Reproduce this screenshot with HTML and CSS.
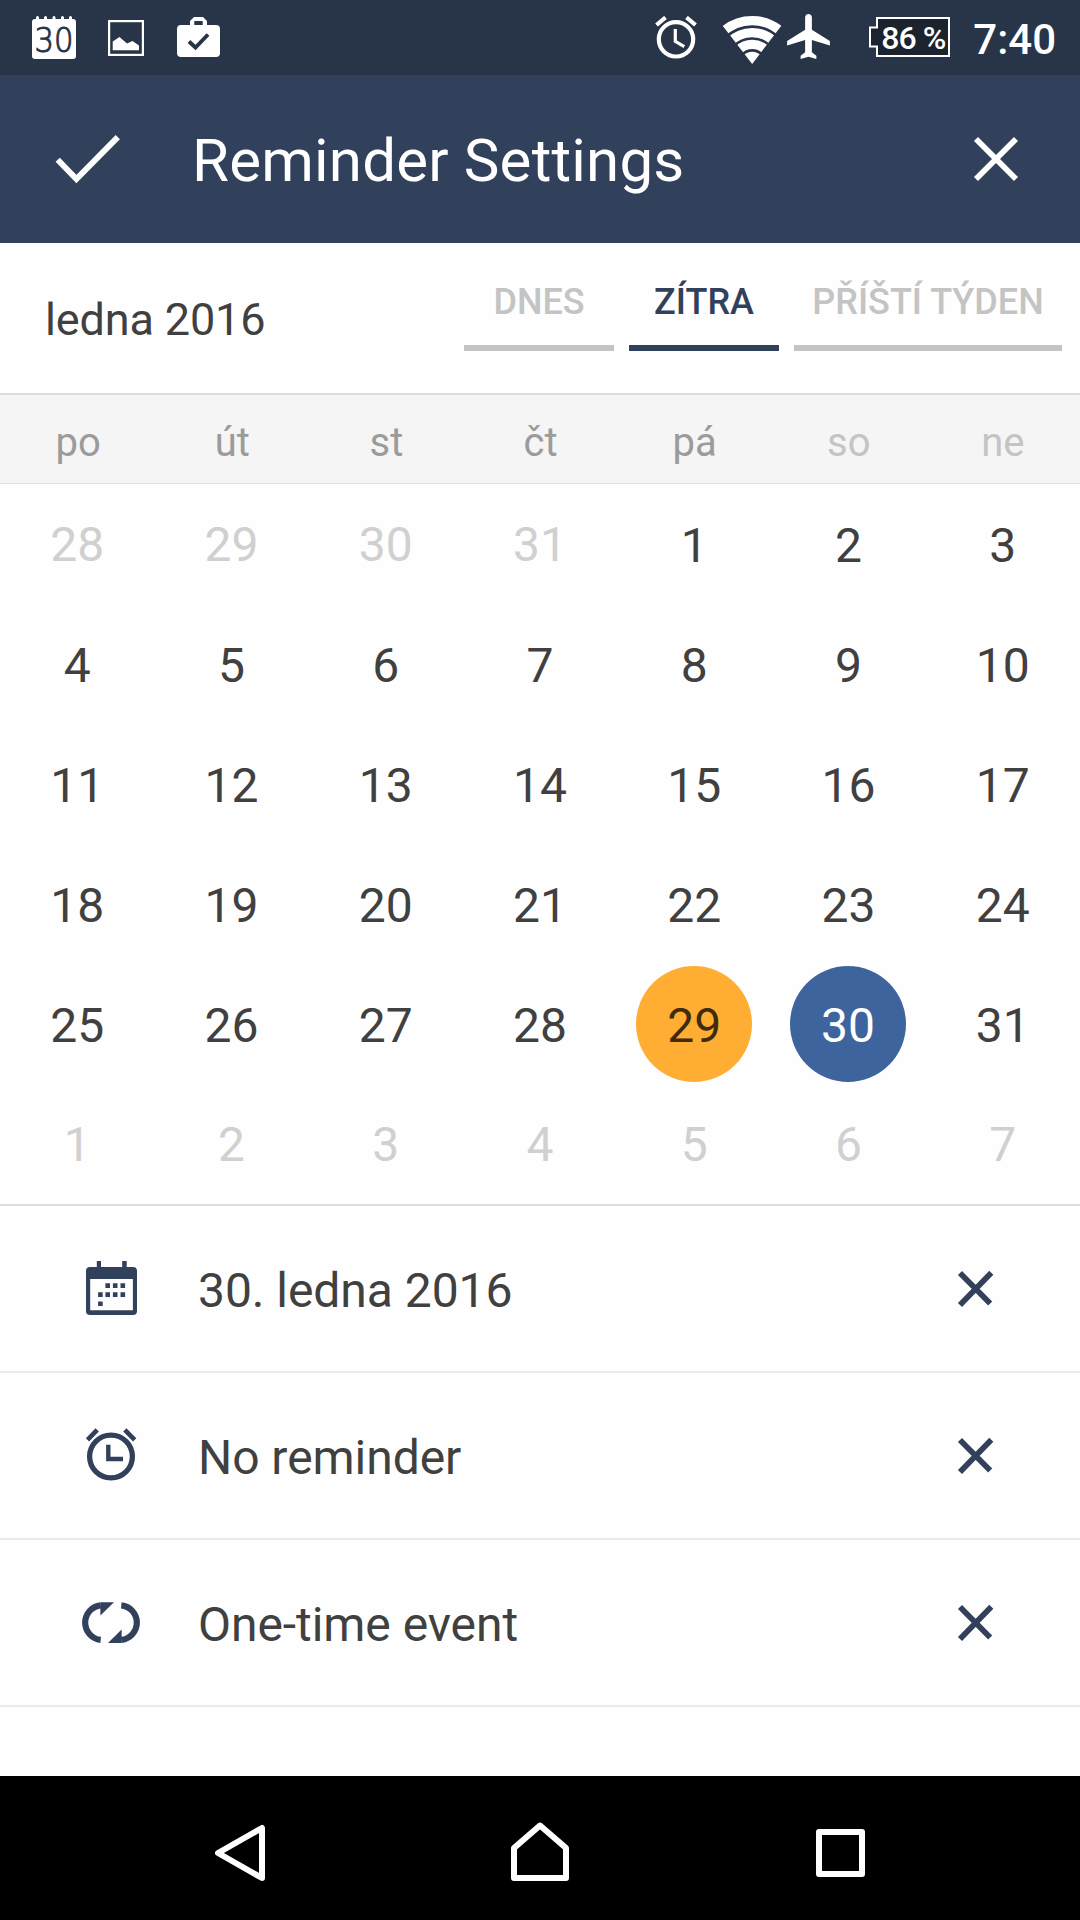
FILE: index.html
```html
<!DOCTYPE html>
<html lang="cs">
<head>
  <meta charset="UTF-8" />
  <meta name="viewport" content="width=device-width, initial-scale=1.0" />
  <title>Reminder Settings</title>
  <link rel="stylesheet" href="styles.css">
</head>
<body>
  <div class="status-bar">
    <div class="notifications">
      <svg class="icon-date" viewBox="0 0 44 44">
        <path fill="#fff" d="M3 3h1V1.500a1.500 1.500 0 0 1 3 0V3h5V1.500a1.500 1.500 0 0 1 3 0V3h5.500V1.500a1.500 1.500 0 0 1 3 0V3h5.500V1.500a1.500 1.500 0 0 1 3 0V3h5V1.500a1.500 1.500 0 0 1 3 0V3h1a3 3 0 0 1 3 3v34a3 3 0 0 1-3 3H3a3 3 0 0 1-3-3V6a3 3 0 0 1 3-3z"/>
        <text class="date-text" x="2.500" y="35.500" textLength="39" lengthAdjust="spacingAndGlyphs">30</text>
      </svg>
      <svg class="icon-picture" viewBox="0 0 36 36">
        <rect x="1.100" y="1.100" width="33.800" height="33.800" fill="none" stroke="#fff" stroke-width="2.200"/>
        <path fill="#fff" d="M4.700 30.300V21.500L11.500 17l7.500 6.500 5.500-2.500 6.500 4.500v4.800z"/>
      </svg>
      <svg class="icon-bag" viewBox="0 0 43 44">
        <path fill="#fff" fill-rule="evenodd" d="M4 9h9V5l4-4h9l4 4v4h9a4 4 0 0 1 4 4v24a4 4 0 0 1-4 4H4a4 4 0 0 1-4-4V13a4 4 0 0 1 4-4zM17.300 5v4h8.400V5z"/>
        <path d="M12 25.500l6.500 6L31 18.500" fill="none" stroke="#283447" stroke-width="3.900"/>
      </svg>
    </div>
    <div class="system">
      <svg class="icon-alarm" viewBox="0 0 42 44">
        <g fill="none" stroke="#fff">
          <circle cx="21" cy="23.300" r="17.200" stroke-width="4.200"/>
          <path d="M1.500 9l9-7.500M31.500 1.500l9 7.500" stroke-width="4.200"/>
          <path d="M20.300 13v12.300l9 5.400" stroke-width="3.200"/>
        </g>
      </svg>
      <svg class="icon-wifi" viewBox="278 47 175 145">
        <clipPath id="wedge"><path d="M366 192L278 78V40h175v38z"/></clipPath>
        <g clip-path="url(#wedge)" fill="none" stroke="#fff" stroke-width="28">
          <circle cx="366" cy="192" r="131"/>
          <circle cx="366" cy="192" r="95"/>
          <circle cx="366" cy="192" r="59"/>
          <circle cx="366" cy="192" r="37" fill="#fff" stroke="none"/>
        </g>
      </svg>
      <svg class="icon-plane" viewBox="2 2 19 20">
        <path fill="#fff" d="M21 16v-2l-8-5V3.500c0-.83-.67-1.500-1.500-1.500S10 2.670 10 3.500V9l-8 5v2l8-2.500V19l-2 1.500V22l3.500-1 3.500 1v-1.500L13 19v-5.500l8 2.500z"/>
      </svg>
      <div class="battery">
        <svg class="battery-shape" viewBox="0 0 81 40">
          <path d="M8 1h72v38H8V29.500H1v-19h7z" fill="#1a232e" stroke="#fff" stroke-width="2"/>
        </svg>
        <span class="battery-text">86 %</span>
      </div>
      <span class="time">7:40</span>
    </div>
  </div>

  <header class="app-bar">
    <svg class="icon-check" viewBox="0 0 66 50">
      <path d="M2.700 25.700L21.400 45 62.800 3.200" fill="none" stroke="#fff" stroke-width="5.900"/>
    </svg>
    <h1>Reminder Settings</h1>
    <svg class="icon-cancel" viewBox="0 0 44 44">
      <path d="M2 2l40 40M42 2L2 42" stroke="#fff" stroke-width="5.700"/>
    </svg>
  </header>

  <section class="month-bar">
    <div class="month">ledna 2016</div>
    <div class="tabs">
      <div class="tab">DNES</div>
      <div class="tab active">ZÍTRA</div>
      <div class="tab wide">PŘÍŠTÍ TÝDEN</div>
    </div>
  </section>

  <div class="week">
    <span>po</span><span>út</span><span>st</span><span>čt</span><span>pá</span><span class="weekend">so</span><span class="weekend">ne</span>
  </div>

  <div class="days">
    <span class="other">28</span><span class="other">29</span><span class="other">30</span><span class="other">31</span><span>1</span><span>2</span><span>3</span>
    <span>4</span><span>5</span><span>6</span><span>7</span><span>8</span><span>9</span><span>10</span>
    <span>11</span><span>12</span><span>13</span><span>14</span><span>15</span><span>16</span><span>17</span>
    <span>18</span><span>19</span><span>20</span><span>21</span><span>22</span><span>23</span><span>24</span>
    <span>25</span><span>26</span><span>27</span><span>28</span><span class="today">29</span><span class="selected">30</span><span>31</span>
    <span class="other">1</span><span class="other">2</span><span class="other">3</span><span class="other">4</span><span class="other">5</span><span class="other">6</span><span class="other">7</span>
  </div>

  <main class="settings">
    <div class="row">
      <svg class="row-icon" viewBox="0 0 60 61">
        <g transform="translate(5 3)" fill="#32415b">
          <path fill-rule="evenodd" d="M4 6h6.800V0H15v6h21.200V0h4.500v6H47a4 4 0 0 1 4 4v40a4 4 0 0 1-4 4H4a4 4 0 0 1-4-4V10a4 4 0 0 1 4-4zM4.200 18v31.300h42.700V18z"/>
          <path d="M19.400 22.300h4.600v4.600h-4.600zM26.900 22.300h4.600v4.600h-4.600zM34.500 22.300h4.600v4.600h-4.600zM12.100 31.300h4.600v4.600h-4.600zM19.400 31.300h4.600v4.600h-4.600zM26.900 31.300h4.600v4.600h-4.600zM34.500 31.300h4.600v4.600h-4.600zM12.100 40.400h4.600V45h-4.600z"/>
        </g>
      </svg>
      <span class="row-text">30. ledna 2016</span>
      <svg class="row-close" viewBox="0 0 36 37">
        <path d="M2 3L32.200 33.600M33.300 2.800L2 35" stroke="#32415b" stroke-width="5.700"/>
      </svg>
    </div>
    <div class="row">
      <svg class="row-icon" viewBox="0 0 60 61">
        <g fill="none" stroke="#32415b">
          <circle cx="30" cy="31.500" r="21.400" stroke-width="5.300"/>
          <path d="M6.500 14.800L16.200 4.800M43.800 4.800l9.900 10" stroke-width="4.600"/>
          <path d="M27.300 19.700V34H42" stroke-width="4.400"/>
        </g>
      </svg>
      <span class="row-text">No reminder</span>
      <svg class="row-close" viewBox="0 0 36 37">
        <path d="M2 3L32.200 33.600M33.300 2.800L2 35" stroke="#32415b" stroke-width="5.700"/>
      </svg>
    </div>
    <div class="row">
      <svg class="row-icon" viewBox="0 0 60 61">
        <g id="half" fill="#32415b">
          <path d="M19.700 47.900A17.400 17.400 0 0 1 19.700 13.300" fill="none" stroke="#32415b" stroke-width="6.200"/>
          <path d="M19.400 10.200H33L19.400 23.600z"/>
        </g>
        <use href="#half" transform="rotate(180 30 30.600)"/>
      </svg>
      <span class="row-text">One-time event</span>
      <svg class="row-close" viewBox="0 0 36 37">
        <path d="M2 3L32.200 33.600M33.300 2.800L2 35" stroke="#32415b" stroke-width="5.700"/>
      </svg>
    </div>
  </main>

  <nav class="nav-bar">
    <svg viewBox="0 0 72 72"><path d="M58 16v50L14 41z"/></svg>
    <svg viewBox="0 0 72 72"><path d="M36 13.500L62 36v30H10V36z"/></svg>
    <svg viewBox="0 0 72 72"><path d="M15 20h43v42H15z"/></svg>
  </nav>
</body>
</html>
```

FILE: styles.css
```css
* {
  margin: 0;
  padding: 0;
  box-sizing: border-box;
}

body {
  width: 1080px;
  height: 1920px;
  display: flex;
  flex-direction: column;
  font-family: Roboto, sans-serif;
  background: #fefefe;
  color: #404040;
  overflow: hidden;
}

svg {
  display: block;
  flex: none;
}

/* status bar */
.status-bar {
  height: 75px;
  padding: 0 24px 0 32px;
  display: flex;
  justify-content: space-between;
  background: #283447;
  color: #fff;
  font-weight: 500;
}

.notifications,
.system {
  display: flex;
  align-items: flex-start;
}

.icon-date {
  width: 44px;
  height: 44px;
  margin-top: 16px;
}

.date-text {
  font-family: "DejaVu Sans", sans-serif;
  font-weight: 200;
  font-size: 33px;
  fill: #283447;
  stroke: #283447;
  stroke-width: 1px;
}

.icon-picture {
  width: 36px;
  height: 36px;
  margin: 20px 0 0 32px;
}

.icon-bag {
  width: 43px;
  height: 44px;
  margin: 16px 0 0 33px;
}

.icon-alarm {
  width: 42px;
  height: 44px;
  margin-top: 16px;
}

.icon-wifi {
  width: 58px;
  height: 48px;
  margin: 16px 0 0 26px;
}

.icon-plane {
  width: 43px;
  height: 45px;
  margin: 14px 0 0 6px;
}

.battery {
  position: relative;
  width: 81px;
  height: 40px;
  margin: 17px 0 0 39px;
}

.battery-shape {
  width: 81px;
  height: 40px;
}

.battery-text {
  position: absolute;
  top: 0;
  left: 7px;
  width: 74px;
  font-size: 32px;
  letter-spacing: -0.9px;
  line-height: 42px;
  text-align: center;
  white-space: nowrap;
}

.time {
  margin-left: 23px;
  font-size: 42px;
  line-height: 79px;
}

/* app bar */
.app-bar {
  height: 168px;
  padding: 0 62px 0 55px;
  display: flex;
  align-items: center;
  background: #32415b;
  color: #fff;
}

.app-bar h1 {
  flex: 1;
  margin-left: 71px;
  padding-top: 3px;
  font-size: 60px;
  font-weight: 400;
  letter-spacing: 0.2px;
}

.icon-check {
  width: 66px;
  height: 50px;
}

.icon-cancel {
  width: 44px;
  height: 44px;
  overflow: visible;
}

/* month and shortcuts */
.month-bar {
  height: 152px;
  padding: 0 18px 0 45px;
  display: flex;
  justify-content: space-between;
  border-bottom: 2px solid #ddd;
}

.month {
  font-size: 45px;
  letter-spacing: -0.15px;
  line-height: 153px;
}

.tabs {
  display: flex;
  gap: 15px;
}

.tab {
  width: 150px;
  height: 108px;
  border-bottom: 6px solid #c4c4c4;
  color: #c4c4c4;
  font-size: 36px;
  font-weight: 500;
  line-height: 118px;
  text-align: center;
  white-space: nowrap;
}

.tab.wide {
  width: 268px;
}

.tab.active {
  color: #32415b;
  border-color: #32415b;
}

/* calendar */
.week,
.days {
  display: grid;
  grid-template-columns: repeat(7, 1fr);
  text-align: center;
}

.week {
  height: 89px;
  padding-left: 1px;
  background: #f5f5f5;
  border-bottom: 1px solid #ddd;
  color: #9b9b9b;
  font-size: 40px;
  line-height: 96px;
}

.week .weekend {
  color: #c4c4c4;
}

.days {
  height: 722px;
  grid-auto-rows: 120px;
  align-items: center;
  justify-items: center;
  border-bottom: 2px solid #ddd;
  font-size: 48px;
}

.days span {
  width: 116px;
  height: 116px;
  line-height: 120px;
  border-radius: 50%;
}

.days .other {
  color: #d0d0d0;
  line-height: 118px;
}

.days .today {
  background: #ffad33;
  color: #402b0d;
}

.days .selected {
  margin-right: 1px;
  background: #3e649e;
  color: #fff;
}

/* settings rows */
.settings {
  flex: 1;
}

.row {
  height: 167px;
  padding: 0 86px 0 81px;
  display: flex;
  align-items: center;
  border-bottom: 2px solid #ebebeb;
}

.row-icon {
  width: 60px;
  height: 61px;
}

.row-text {
  flex: 1;
  margin-left: 57px;
  padding-top: 4px;
  font-size: 48px;
  letter-spacing: -0.05px;
}

.row-close {
  width: 36px;
  height: 37px;
  overflow: visible;
}

/* navigation bar */
.nav-bar {
  height: 144px;
  padding: 0 90px;
  display: flex;
  align-items: center;
  justify-content: space-around;
  background: #000;
}

.nav-bar svg {
  width: 72px;
  height: 72px;
  fill: none;
  stroke: #fff;
  stroke-width: 6px;
  stroke-linejoin: round;
}
```
